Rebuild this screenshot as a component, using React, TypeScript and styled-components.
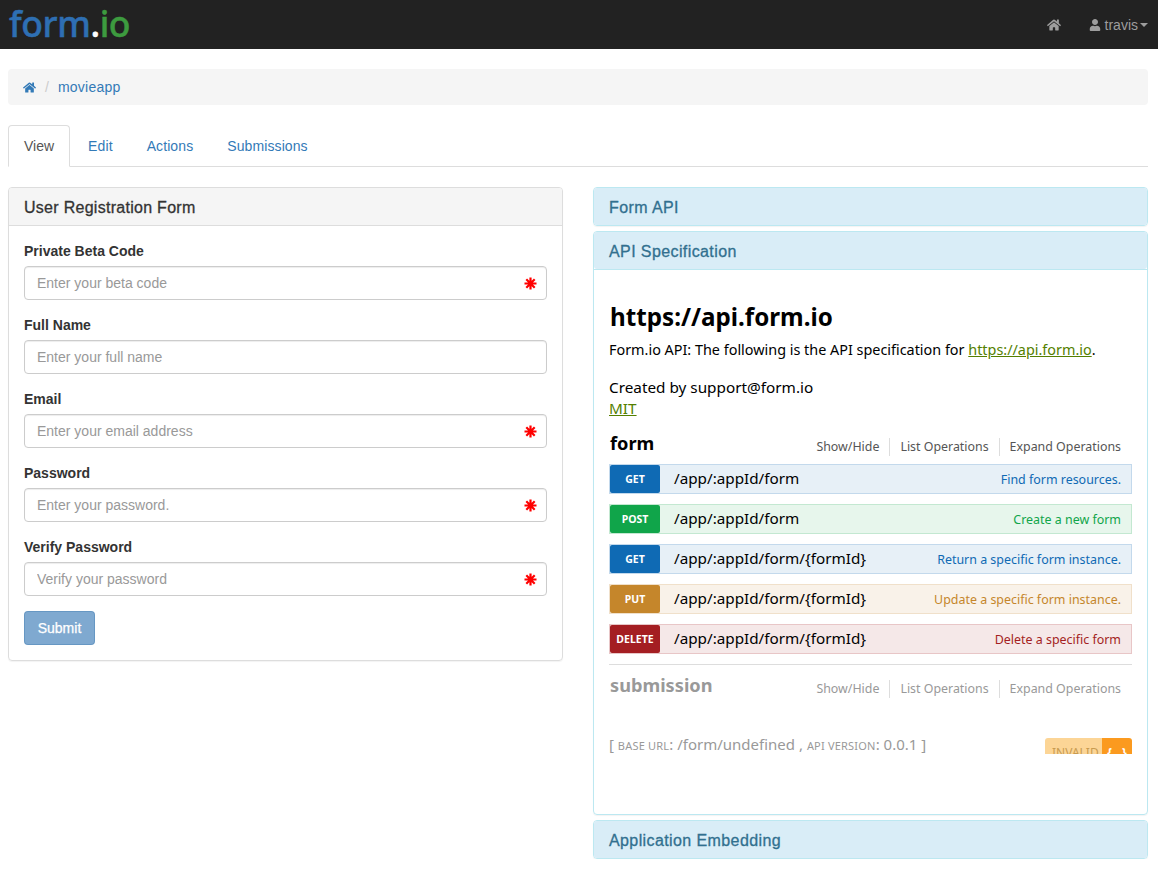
import { FaHome, FaUser } from 'react-icons/fa';
import styled, { createGlobalStyle } from 'styled-components';

const GlobalStyle = createGlobalStyle`
  * {
    box-sizing: border-box;
  }

  body {
    margin: 0;
    background: #fff;
    color: #333;
    font-family: "Liberation Sans", Arial, sans-serif;
    font-size: 14px;
    line-height: 20px;
  }
`;

const fields = [
  { label: 'Private Beta Code', placeholder: 'Enter your beta code', required: true },
  { label: 'Full Name', placeholder: 'Enter your full name', required: false },
  { label: 'Email', placeholder: 'Enter your email address', required: true },
  { label: 'Password', placeholder: 'Enter your password.', required: true },
  { label: 'Verify Password', placeholder: 'Verify your password', required: true },
];

const methodColors = {
  GET: { solid: '#0f6ab4', bg: '#e7f0f7', border: '#c3d9ec' },
  POST: { solid: '#10a54a', bg: '#e7f6ec', border: '#c3e8d1' },
  PUT: { solid: '#c5862b', bg: '#f9f2e9', border: '#f0e0ca' },
  DELETE: { solid: '#a41e22', bg: '#f5e8e8', border: '#e8c6c7' },
};

type Method = keyof typeof methodColors;

const operations: { method: Method; path: string; summary: string }[] = [
  { method: 'GET', path: '/app/:appId/form', summary: 'Find form resources.' },
  { method: 'POST', path: '/app/:appId/form', summary: 'Create a new form' },
  { method: 'GET', path: '/app/:appId/form/{formId}', summary: 'Return a specific form instance.' },
  { method: 'PUT', path: '/app/:appId/form/{formId}', summary: 'Update a specific form instance.' },
  { method: 'DELETE', path: '/app/:appId/form/{formId}', summary: 'Delete a specific form' },
];

function ResourceLinks({ muted }: { muted?: boolean }) {
  return (
    <Links $muted={muted}>
      <li>Show/Hide</li>
      <li>List Operations</li>
      <li>Expand Operations</li>
    </Links>
  );
}

function AsteriskIcon() {
  return (
    <svg width="13" height="13" viewBox="0 0 13 13" stroke="#f00" strokeWidth="2.2">
      <path d="M6.5 0.5v12M0.5 6.5h12M2.3 2.3l8.4 8.4M10.7 2.3l-8.4 8.4" />
      <circle cx="6.5" cy="6.5" r="2.4" fill="#f00" stroke="none" />
    </svg>
  );
}

export default function App() {
  return (
    <>
      <GlobalStyle />
      <Navbar>
        <Logo>
          form<LogoDot>.</LogoDot><LogoIo>io</LogoIo>
        </Logo>
        <NavRight>
          <FaHome size={14} />
          <UserMenu>
            <FaUser size={12} />
            travis
            <Caret />
          </UserMenu>
        </NavRight>
      </Navbar>

      <Page>
        <Breadcrumb>
          <FaHome size={13} />
          <Slash>/</Slash>
          <Crumb>movieapp</Crumb>
        </Breadcrumb>

        <Tabs>
          <Tab $active>View</Tab>
          <Tab>Edit</Tab>
          <Tab>Actions</Tab>
          <Tab>Submissions</Tab>
        </Tabs>

        <Columns>
          <Panel>
            <DefaultHeading>User Registration Form</DefaultHeading>
            <FormBody>
              {fields.map((field) => (
                <Field key={field.label}>
                  <Label>{field.label}</Label>
                  <InputWrap>
                    <Input placeholder={field.placeholder} readOnly />
                    {field.required && (
                      <Required>
                        <AsteriskIcon />
                      </Required>
                    )}
                  </InputWrap>
                </Field>
              ))}
              <Submit type="button">Submit</Submit>
            </FormBody>
          </Panel>

          <RightColumn>
            <InfoPanel>
              <InfoHeading>Form API</InfoHeading>
            </InfoPanel>

            <InfoPanel>
              <InfoHeading>API Specification</InfoHeading>
              <SwaggerBody>
                <ApiTitle>https://api.form.io</ApiTitle>
                <ApiDescription>
                  Form.io API: The following is the API specification for <GreenLink>https://api.form.io</GreenLink>.
                </ApiDescription>
                <Contact>Created by support@form.io</Contact>
                <Contact><GreenLink>MIT</GreenLink></Contact>

                <ResourceHead>
                  <ResourceName>form</ResourceName>
                  <ResourceLinks />
                </ResourceHead>
                <Operations>
                  {operations.map((op) => (
                    <Operation key={op.method + op.summary} $method={op.method}>
                      <Badge $method={op.method}>{op.method}</Badge>
                      <OpPath>{op.path}</OpPath>
                      <OpSummary $method={op.method}>{op.summary}</OpSummary>
                    </Operation>
                  ))}
                </Operations>

                <ResourceHead $second>
                  <ResourceName $muted>submission</ResourceName>
                  <ResourceLinks muted />
                </ResourceHead>

                <FooterLine>
                  <BaseUrl>
                    [ <small>BASE URL</small>: /form/undefined , <small>API VERSION</small>: 0.0.1 ]
                  </BaseUrl>
                  <Validator>
                    <ValidatorText>INVALID</ValidatorText>
                    <ValidatorIcon>{'{...}'}</ValidatorIcon>
                  </Validator>
                </FooterLine>
              </SwaggerBody>
            </InfoPanel>

            <InfoPanel>
              <InfoHeading>Application Embedding</InfoHeading>
            </InfoPanel>
          </RightColumn>
        </Columns>
      </Page>
    </>
  );
}

const Navbar = styled.nav`
  display: flex;
  align-items: center;
  justify-content: space-between;
  height: 49px;
  padding: 0 10px 0 9px;
  background: #222;
`;

const Logo = styled.div`
  font-family: "Noto Sans", sans-serif;
  font-size: 35.5px;
  font-weight: 500;
  line-height: 49px;
  letter-spacing: -0.4px;
  color: #2e6fb3;
  margin-top: -3px;
  -webkit-text-stroke: 0.5px currentColor;
`;

const LogoDot = styled.span`
  color: #fff;
`;

const LogoIo = styled.span`
  color: #3d9b3f;
`;

const NavRight = styled.div`
  display: flex;
  align-items: center;
  gap: 28px;
  color: #9d9d9d;
`;

const UserMenu = styled.div`
  display: flex;
  align-items: center;
  gap: 3px;

  svg {
    margin-right: 1px;
  }
`;

const Caret = styled.span`
  width: 0;
  height: 0;
  margin-left: -1px;
  border-top: 4px solid #9d9d9d;
  border-left: 4px solid transparent;
  border-right: 4px solid transparent;
`;

const Page = styled.main`
  padding: 20px 10px 0 8px;
`;

const Breadcrumb = styled.div`
  display: flex;
  align-items: center;
  height: 36px;
  padding: 0 15px;
  border-radius: 4px;
  background: #f5f5f5;
  color: #337ab7;
`;

const Slash = styled.span`
  margin: 0 9px;
  color: #ccc;
`;

const Crumb = styled.span`
  letter-spacing: 0.25px;
`;

const Tabs = styled.div`
  display: flex;
  height: 42px;
  margin-top: 20px;
  border-bottom: 1px solid #ddd;
`;

const Tab = styled.div<{ $active?: boolean }>`
  height: 42px;
  margin-right: 2px;
  padding: 10px 15px;
  border: 1px solid ${(props) => (props.$active ? '#ddd' : 'transparent')};
  border-bottom-color: ${(props) => (props.$active ? '#fff' : 'transparent')};
  border-radius: 4px 4px 0 0;
  background: ${(props) => (props.$active ? '#fff' : 'transparent')};
  color: ${(props) => (props.$active ? '#555' : '#337ab7')};
  letter-spacing: ${(props) => (props.$active ? '0' : '0.1px')};
`;

const Columns = styled.div`
  display: grid;
  grid-template-columns: 555px 555px;
  gap: 30px;
  margin-top: 20px;
`;

const RightColumn = styled.div`
  display: flex;
  flex-direction: column;
  gap: 5px;
`;

const Panel = styled.section`
  align-self: start;
  border: 1px solid #ddd;
  border-radius: 4px;
  box-shadow: 0 1px 1px rgba(0, 0, 0, 0.05);
`;

const DefaultHeading = styled.h3`
  height: 38px;
  margin: 0;
  padding: 11px 15px 9px;
  border-bottom: 1px solid #ddd;
  border-radius: 3px 3px 0 0;
  background: #f5f5f5;
  color: #333;
  font-size: 16px;
  font-weight: 400;
  line-height: 18px;
  letter-spacing: 0.28px;
  -webkit-text-stroke: 0.3px currentColor;
`;

const FormBody = styled.div`
  padding: 15px 15px 15px;
`;

const Field = styled.div`
  margin-bottom: 15px;
`;

const Label = styled.label`
  display: block;
  margin-bottom: 5px;
  color: #333;
  font-weight: 700;
`;

const InputWrap = styled.div`
  position: relative;
`;

const Input = styled.input`
  display: block;
  width: 100%;
  height: 34px;
  padding: 6px 12px;
  border: 1px solid #ccc;
  border-radius: 4px;
  box-shadow: inset 0 1px 1px rgba(0, 0, 0, 0.075);
  color: #555;
  font-family: inherit;
  font-size: 14px;

  &::placeholder {
    color: #999;
    opacity: 1;
  }
`;

const Required = styled.span`
  position: absolute;
  top: 11px;
  right: 10px;
  display: flex;
`;

const Submit = styled.button`
  display: block;
  width: 71px;
  height: 34px;
  padding: 0;
  border: 1px solid rgba(46, 109, 164, 0.3);
  border-radius: 4px;
  background: #7fa9d0;
  color: #fff;
  font-family: inherit;
  font-size: 14px;
  -webkit-text-stroke: 0.25px currentColor;
`;

const InfoPanel = styled.section`
  border: 1px solid #bce8f1;
  border-radius: 4px;
  box-shadow: 0 1px 1px rgba(0, 0, 0, 0.05);
`;

const InfoHeading = styled.h3`
  height: 37px;
  margin: 0;
  padding: 11px 15px 8px;
  border-radius: 3px;
  background: #d9edf7;
  color: #31708f;
  font-size: 16px;
  font-weight: 400;
  line-height: 18px;
  letter-spacing: 0.4px;
  -webkit-text-stroke: 0.3px currentColor;
`;

const SwaggerBody = styled.div`
  height: 545px;
  padding: 31px 15px 0;
  border-top: 1px solid #bce8f1;
  color: #000;
  font-family: "Noto Sans", sans-serif;
  font-size: 14.4px;
  line-height: 21px;
`;

const ApiTitle = styled.h1`
  margin: 0 0 6px 1px;
  color: #000;
  font-size: 24.2px;
  font-weight: 700;
  line-height: 32px;
`;

const ApiDescription = styled.div`
  margin-bottom: 17px;
`;

const GreenLink = styled.a`
  color: #547f00;
  text-decoration: underline;
`;

const Contact = styled.div`
  font-size: 15.3px;
`;

const ResourceHead = styled.div<{ $second?: boolean }>`
  display: flex;
  align-items: center;
  justify-content: space-between;
  height: ${(props) => (props.$second ? '41px' : '24px')};
  margin-top: ${(props) => (props.$second ? '0' : '12px')};
  margin-bottom: ${(props) => (props.$second ? '0' : '9px')};
  padding-left: 1px;
  border-top: ${(props) => (props.$second ? '1px solid #ddd' : 'none')};
`;

const ResourceName = styled.h2<{ $muted?: boolean }>`
  margin: ${(props) => (props.$muted ? '0' : '-1px')} 0 0;
  color: ${(props) => (props.$muted ? '#999' : '#000')};
  font-size: 18.2px;
  font-weight: 700;
  line-height: 24px;
`;

const Links = styled.ul<{ $muted?: boolean }>`
  display: flex;
  align-items: center;
  margin: 8px 0 0;
  padding: 0;
  color: ${(props) => (props.$muted ? '#999' : '#555')};
  font-size: 12.4px;
  line-height: 18px;
  list-style: none;

  li {
    padding: 0 10px;
    border-right: 1px solid #ddd;
  }

  li:last-child {
    padding-right: 11px;
    border-right: none;
  }
`;

const Operations = styled.div`
  display: flex;
  flex-direction: column;
  gap: 10px;
  margin-bottom: 10px;
`;

const Operation = styled.div<{ $method: Method }>`
  display: flex;
  align-items: center;
  height: 30px;
  border: 1px solid ${(props) => methodColors[props.$method].border};
  background: ${(props) => methodColors[props.$method].bg};
`;

const Badge = styled.span<{ $method: Method }>`
  display: flex;
  align-items: center;
  justify-content: center;
  flex-shrink: 0;
  width: 50px;
  height: 28px;
  border-radius: 2px;
  background: ${(props) => methodColors[props.$method].solid};
  color: #fff;
  font-size: 10.5px;
  font-weight: 700;
`;

const OpPath = styled.span`
  margin: -2px 0 0 14px;
  color: #000;
  font-size: 15.25px;
`;

const OpSummary = styled.span<{ $method: Method }>`
  margin-left: auto;
  padding-right: 10px;
  color: ${(props) => methodColors[props.$method].solid};
  font-size: 12.45px;
`;

const FooterLine = styled.div`
  display: flex;
  justify-content: space-between;
  align-items: flex-start;
  margin-top: 30px;
`;

const BaseUrl = styled.div`
  margin-top: -1px;
  color: #999;
  font-size: 15px;

  small {
    font-size: 11px;
    letter-spacing: 0.2px;
  }
`;

const Validator = styled.div`
  display: flex;
  flex-shrink: 0;
  width: 87px;
  height: 16px;
  margin-top: 3px;
  border-radius: 3px 3px 0 0;
  overflow: hidden;
  font-size: 12px;
  line-height: 30px;
`;

const ValidatorText = styled.span`
  flex: 1;
  padding-left: 7px;
  background: #fcd596;
  color: #c89b50;
`;

const ValidatorIcon = styled.span`
  width: 30px;
  background: #fb9a1f;
  color: #fff;
  font-weight: 700;
  text-align: center;
`;
